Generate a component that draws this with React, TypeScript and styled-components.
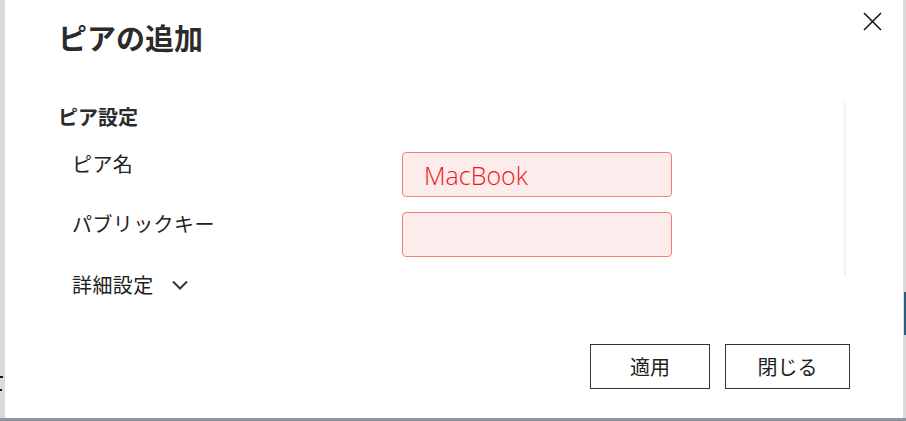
import React from "react";
import styled, { createGlobalStyle } from "styled-components";

const GlobalStyle = createGlobalStyle`
  html, body { margin: 0; padding: 0; background: #dcdcdc; }
  body { font-family: "Noto Sans CJK JP", "Noto Sans", sans-serif; }
  * { box-sizing: border-box; }
`;

const Page = styled.div`
  width: 906px;
  height: 421px;
  display: flex;
  flex-direction: column;
  overflow: hidden;
  background: #dcdcdc;
`;

const Stage = styled.div`
  display: flex;
  height: 418px;
`;

const LeftStrip = styled.div`
  width: 5px;
  background: #dadada;
  display: flex;
  flex-direction: column;
  align-items: flex-start;
  padding-top: 376px;
  gap: 11px;
`;

const Mark = styled.span<{ $w: number }>`
  display: block;
  width: ${(p) => p.$w}px;
  height: 2px;
  background: #111;
`;

const RightStrip = styled.div`
  width: 3px;
  background: #d9d9d9;
  display: flex;
  flex-direction: column;
  align-items: flex-end;
  padding-top: 292px;
`;

const BlueTab = styled.div`
  width: 2px;
  height: 43px;
  background: #2c5f7f;
`;

const BottomStrip = styled.div`
  height: 3px;
  background: #8e959c;
`;

const Dialog = styled.div`
  flex: 1;
  background: #fff;
  display: flex;
  flex-direction: column;
`;

const Header = styled.div`
  display: flex;
  justify-content: space-between;
  align-items: flex-start;
  padding: 0 21px 0 53px;
  height: 55px;
`;

const Title = styled.h1`
  margin: 20px 0 0;
  font-size: 29px;
  line-height: 35px;
  font-weight: 700;
  color: #2b2b2b;
`;

const CloseButton = styled.button`
  margin-top: 12px;
  width: 19px;
  height: 19px;
  padding: 0;
  border: none;
  background: transparent;
  display: flex;
`;

const Body = styled.div`
  display: flex;
  margin-top: 47px;
  padding: 0 57px 0 53px;
`;

const FormColumn = styled.div`
  flex: 1;
  display: flex;
  flex-direction: column;
`;

const ScrollTrack = styled.div`
  width: 2px;
  height: 175px;
  background: #f2f2f2;
`;

const SectionTitle = styled.h2`
  margin: 1px 0 0;
  font-size: 20px;
  line-height: 28px;
  font-weight: 700;
  color: #2b2b2b;
`;

const FormGrid = styled.div`
  margin: 21px 0 0 14px;
  display: grid;
  grid-template-columns: 330px 270px;
  row-gap: 15px;
`;

const Label = styled.label`
  font-size: 20px;
  line-height: 24px;
  letter-spacing: 0.4px;
  color: #222;
`;

const Field = styled.div`
  height: 45px;
  border: 1px solid #f57e76;
  border-radius: 4px;
  background: #fdecec;
  display: flex;
  align-items: center;
  padding-left: 21px;
  font-family: "Segoe UI", "Open Sans", sans-serif;
  font-weight: 300;
  font-size: 25px;
  color: #f01616;
`;

const AdvancedToggle = styled.div`
  margin: 16px 0 0 14px;
  display: flex;
  align-items: center;
  gap: 18px;
  font-size: 20px;
  line-height: 24px;
  letter-spacing: 0.4px;
  color: #222;
`;

const Footer = styled.div`
  margin-top: auto;
  display: flex;
  justify-content: flex-end;
  gap: 15px;
  padding: 0 53px 29px 0;
`;

const ActionButton = styled.button<{ $w: number }>`
  width: ${(p) => p.$w}px;
  height: 45px;
  border: 1px solid #333;
  background: #fff;
  font-family: "Noto Sans CJK JP", sans-serif;
  font-size: 20px;
  color: #222;
  padding: 0;
`;

export default function App() {
  return (
    <>
      <GlobalStyle />
      <Page>
        <Stage>
          <LeftStrip>
            <Mark $w={3} />
            <Mark $w={2} />
          </LeftStrip>
          <Dialog>
            <Header>
              <Title>ピアの追加</Title>
              <CloseButton aria-label="閉じる">
                <svg width="19" height="19" viewBox="0 0 19 19">
                  <path d="M1 1 L18 18 M18 1 L1 18" stroke="#111" strokeWidth="1.5" fill="none" />
                </svg>
              </CloseButton>
            </Header>
            <Body>
              <FormColumn>
                <SectionTitle>ピア設定</SectionTitle>
                <FormGrid>
                  <Label>ピア名</Label>
                  <Field>MacBook</Field>
                  <Label>パブリックキー</Label>
                  <Field />
                </FormGrid>
                <AdvancedToggle>
                  詳細設定
                  <svg width="16" height="10" viewBox="0 0 16 10">
                    <path d="M1 1.5 L8 8.5 L15 1.5" stroke="#333" strokeWidth="2" fill="none" />
                  </svg>
                </AdvancedToggle>
              </FormColumn>
              <ScrollTrack />
            </Body>
            <Footer>
              <ActionButton $w={120}>適用</ActionButton>
              <ActionButton $w={125}>閉じる</ActionButton>
            </Footer>
          </Dialog>
          <RightStrip>
            <BlueTab />
          </RightStrip>
        </Stage>
        <BottomStrip />
      </Page>
    </>
  );
}
